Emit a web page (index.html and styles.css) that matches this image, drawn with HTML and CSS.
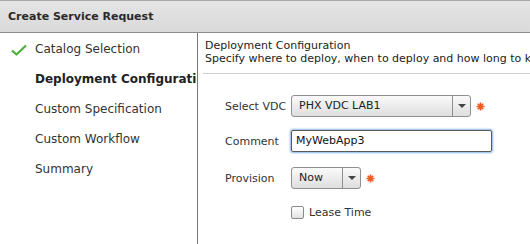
FILE: index.html
```html
<!doctype html>
<html lang="en">
  <head>
    <meta charset="UTF-8" />
    <title>Create Service Request</title>
    <link rel="stylesheet" href="styles.css">
  </head>
  <body>
    <div class="dialog">
      <div class="title-bar">Create Service Request</div>

      <div class="dialog-body">
        <ul class="steps">
          <li class="step step-done">
            <svg class="check" width="16" height="12" viewBox="0 0 16 12">
              <path d="M1 6.5 L5.5 10.5 L15 1.5" fill="none" stroke="#4caf3a" stroke-width="2.2" stroke-linejoin="round" />
            </svg>
            Catalog Selection
          </li>
          <li class="step step-current">Deployment Configuration</li>
          <li class="step">Custom Specification</li>
          <li class="step">Custom Workflow</li>
          <li class="step">Summary</li>
        </ul>

        <div class="content">
          <div class="section-head">
            <div>Deployment Configuration</div>
            <div>Specify where to deploy, when to deploy and how long to keep it deployed</div>
          </div>

          <div class="form">
            <div class="form-row row-vdc">
              <label class="form-label">Select VDC</label>
              <div class="select select-wide">
                <span class="select-value">PHX VDC LAB1</span>
                <span class="select-arrow"></span>
              </div>
              <svg class="required" width="9" height="9" viewBox="0 0 9 9">
                <path d="M4.5 0.5 V8.5 M0.5 4.5 H8.5 M1.7 1.7 L7.3 7.3 M7.3 1.7 L1.7 7.3" stroke="#f05a1e" stroke-width="1.6" />
              </svg>
            </div>

            <div class="form-row row-comment">
              <label class="form-label">Comment</label>
              <div class="text-input">MyWebApp3</div>
            </div>

            <div class="form-row row-provision">
              <label class="form-label">Provision</label>
              <div class="select select-small">
                <span class="select-value">Now</span>
                <span class="select-arrow"></span>
              </div>
              <svg class="required" width="9" height="9" viewBox="0 0 9 9">
                <path d="M4.5 0.5 V8.5 M0.5 4.5 H8.5 M1.7 1.7 L7.3 7.3 M7.3 1.7 L1.7 7.3" stroke="#f05a1e" stroke-width="1.6" />
              </svg>
            </div>

            <div class="form-row row-lease">
              <span class="form-label"></span>
              <span class="checkbox"></span>
              <span class="check-label">Lease Time</span>
            </div>
          </div>
        </div>
      </div>
    </div>
  </body>
</html>
```

FILE: styles.css
```css
body {
  margin: 0;
  font-family: "DejaVu Sans", Verdana, sans-serif;
  font-size: 11px;
  color: #222;
  background-color: #fff;
}
.dialog {
  width: 530px;
  height: 244px;
  overflow: hidden;
  display: flex;
  flex-direction: column;
}
.title-bar {
  height: 31px;
  line-height: 31px;
  padding-left: 8px;
  font-weight: bold;
  font-size: 11px;
  color: #2a2a2a;
  background: linear-gradient(#e4e4e4, #dadada);
  border-top: 1px solid #a8a8a8;
  border-bottom: 1px solid #8c8c8c;
  white-space: nowrap;
}
.dialog-body {
  flex: 1;
  display: flex;
}
.steps {
  list-style: none;
  margin: 0;
  padding: 0;
  width: 197px;
  flex-shrink: 0;
  border-right: 1px solid #7a7a7a;
  overflow: hidden;
}
.step {
  position: relative;
  height: 30px;
  line-height: 30px;
  padding-left: 35px;
  font-size: 12px;
  white-space: nowrap;
  color: #333;
}
.step:first-child {
  margin-top: 1px;
}
.step-current {
  font-weight: bold;
  color: #222;
}
.check {
  position: absolute;
  left: 11px;
  top: 10px;
}
.content {
  flex: 1;
  overflow: hidden;
}
.section-head {
  margin: 0 0 0 5px;
  padding: 6px 0 8px 2px;
  border-bottom: 1px solid #cfcfcf;
  line-height: 13px;
  font-size: 11px;
  white-space: nowrap;
  color: #222;
}
.form {
  padding-top: 21px;
}
.form-row {
  display: flex;
  align-items: center;
  height: 22px;
}
.row-comment {
  margin-top: 13px;
}
.row-provision {
  margin-top: 15px;
}
.row-lease {
  margin-top: 12px;
}
.form-label {
  flex: 0 0 93px;
  box-sizing: border-box;
  padding-left: 27px;
  white-space: nowrap;
  font-size: 11px;
  color: #333;
}
.select {
  display: flex;
  box-sizing: border-box;
  height: 22px;
  border: 1px solid #8f8f8f;
  border-radius: 3px;
  background: linear-gradient(#fafafa, #dedede);
}
.select-wide {
  width: 180px;
}
.select-small {
  width: 70px;
}
.select-value {
  flex: 1;
  padding-left: 7px;
  line-height: 20px;
  font-size: 11px;
  color: #222;
}
.select-arrow {
  width: 17px;
  border-left: 1px solid #8f8f8f;
  position: relative;
}
.select-arrow::after {
  content: "";
  position: absolute;
  left: 5px;
  top: 8px;
  border-left: 4px solid transparent;
  border-right: 4px solid transparent;
  border-top: 4px solid #444;
}
.required {
  margin-left: 5px;
}
.text-input {
  box-sizing: border-box;
  width: 201px;
  height: 22px;
  line-height: 20px;
  padding-left: 4px;
  border: 1px solid #5a5a5a;
  border-radius: 2px;
  box-shadow: 0 0 2px 1px #86b4e8;
  font-size: 11px;
  color: #111;
}
.checkbox {
  box-sizing: border-box;
  width: 13px;
  height: 13px;
  border: 1px solid #8a8a8a;
  border-radius: 2px;
  background: linear-gradient(#ffffff, #e2e2e2);
}
.check-label {
  margin-left: 5px;
  font-size: 11px;
  color: #333;
}
```
